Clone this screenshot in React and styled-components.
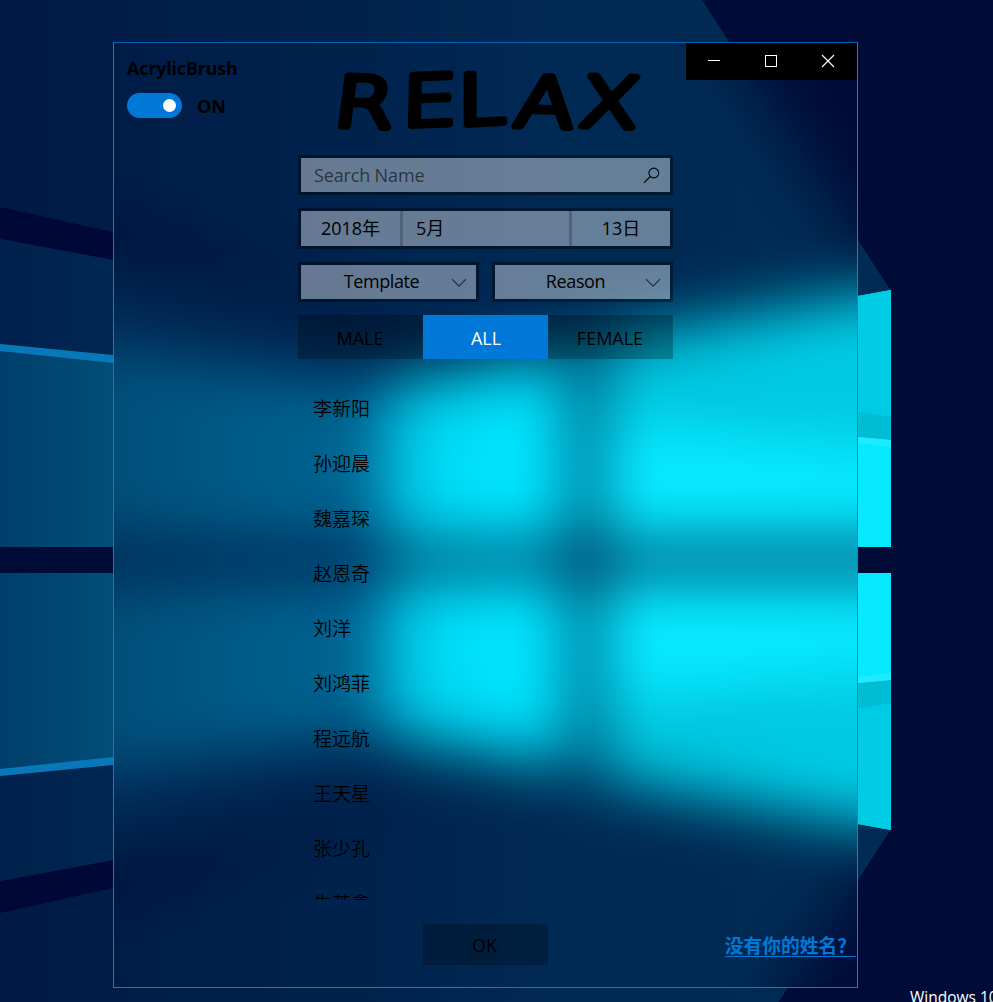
import React from "react";
import styled, { createGlobalStyle } from "styled-components";

const GlobalStyle = createGlobalStyle`
  * { box-sizing: border-box; }
  body {
    margin: 0;
    overflow: hidden;
    background: #000b38;
    color: #000;
    font: 400 18px/24px "Open Sans", "Noto Sans CJK SC", sans-serif;
  }
  button, input { font: inherit; color: inherit; border: 0; padding: 0; margin: 0; border-radius: 0; }
`;

const Desktop = styled.main`
  position: relative;
  width: 993px;
  height: 1002px;
  overflow: hidden;
`;

const WallpaperArt = styled.svg`
  display: block;
  width: 1113px;
  height: 1202px;
  margin: -100px 0 0 0;
`;

const Watermark = styled.span`
  position: absolute;
  left: 910px;
  top: 985px;
  white-space: nowrap;
  color: #fff;
  font-size: 15.5px;
`;

const Window = styled.section`
  position: absolute;
  left: 113px;
  top: 42px;
  width: 745px;
  height: 946px;
  border: 1px solid #1b78c8;
  border-top-color: #0063b4;
  border-right-color: #1485c4;
  display: grid;
  grid-template-columns: 184px 375px 184px;
  isolation: isolate;
`;

const Acrylic = styled.div`
  position: absolute;
  inset: 0;
  z-index: -1;
  overflow: hidden;
  background: #000b38;
  ${WallpaperArt} {
    margin: -143px 0 0 -114px;
    filter: blur(30px);
  }
`;

const Side = styled.div`
  display: flex;
  flex-direction: column;
  justify-content: space-between;
  align-items: ${(p) => (p.$end ? "flex-end" : "flex-start")};
  min-width: 0;
`;

const BrushSetting = styled.div`
  padding: 13px 0 0 13px;
  font-weight: 700;
`;

const BrushLabel = styled.div`
  height: 24px;
  font-size: 17.8px;
  letter-spacing: -0.1px;
`;

const SwitchRow = styled.div`
  display: flex;
  align-items: center;
  gap: 15px;
  margin-top: 13px;
  height: 25px;
  font-size: 18px;
`;

const Toggle = styled.button`
  display: flex;
  align-items: center;
  justify-content: flex-end;
  width: 55px;
  height: 25px;
  padding-right: 6px;
  border-radius: 13px;
  background: #0078d7;
`;

const Knob = styled.span`
  width: 13px;
  height: 13px;
  border-radius: 50%;
  background: #fff;
`;

const Caption = styled.div`
  display: flex;
  width: 171px;
  height: 37px;
  background: #000;
`;

const CaptionButton = styled.button`
  width: 57px;
  height: 37px;
  background: transparent;
  svg { display: block; width: 57px; height: 37px; }
`;

const HelpLink = styled.a`
  margin: 0 1px 30px 0;
  height: 22px;
  font: 700 18.75px/20px "Noto Sans CJK SC", sans-serif;
  color: #0078d7;
  white-space: nowrap;
  border-bottom: 1px solid #0078d7;
`;

const Center = styled.div`
  display: flex;
  flex-direction: column;
`;

const Title = styled.svg`
  display: block;
  width: 375px;
  height: 112px;
  flex: none;
  overflow: visible;
`;

const Form = styled.form`
  display: flex;
  flex-direction: column;
  gap: 13px;
`;

const Field = styled.div`
  display: flex;
  flex: 1;
  align-items: stretch;
  height: ${(p) => p.$height || 40}px;
  border: 3px solid rgba(0, 0, 0, 0.4);
  background: rgba(255, 255, 255, 0.4);
  background-clip: padding-box;
`;

const FieldRow = styled.div`
  display: flex;
  gap: 13px;
`;

const SearchField = styled(Field)`
  flex: none;
  align-items: center;
  justify-content: space-between;
  padding: 0 10px 0 13px;
`;

const Placeholder = styled.span`
  color: rgba(0, 0, 0, 0.6);
  letter-spacing: -0.15px;
`;

const DateField = styled(Field)`
  flex: none;
`;

const DatePart = styled.span`
  display: flex;
  align-items: center;
  width: ${(p) => p.$width}px;
  justify-content: ${(p) => (p.$left ? "flex-start" : "center")};
  padding-left: ${(p) => (p.$left ? 13 : 0)}px;
  padding-bottom: 2px;
  border-right: ${(p) => (p.$last ? 0 : 3)}px solid rgba(0, 0, 0, 0.2);
`;

const SelectLabel = styled.span`
  flex: 1;
  display: flex;
  align-items: center;
  justify-content: center;
  padding: 0 0 2px 11px;
  letter-spacing: -0.4px;
`;

const Chevron = styled.svg`
  width: 16px;
  height: 10px;
  margin: 13px 9px 0 0;
`;

const Segments = styled.div`
  display: flex;
  height: 44px;
`;

const PushButton = styled.button`
  width: 125px;
  height: ${(p) => p.$height}px;
  background: ${(p) => (p.$active ? "#0078d7" : "rgba(0, 0, 0, 0.25)")};
  color: ${(p) => (p.$active ? "#fff" : "#000")};
  padding: ${(p) => p.$padding || "2px 1px 0 0"};
`;

const NameList = styled.ul`
  list-style: none;
  margin: 0;
  padding: 22px 0 0 15px;
  height: 541px;
  overflow: hidden;
`;

const NameItem = styled.li`
  height: 55px;
  font: 350 19px/53px "Noto Sans CJK SC", sans-serif;
`;

const Footer = styled.div`
  display: flex;
  justify-content: center;
  margin-top: 24px;
`;

const NAMES = ["李新阳", "孙迎晨", "魏嘉琛", "赵恩奇", "刘洋", "刘鸿菲", "程远航", "王天星", "张少孔", "朱英鑫"];

function WallpaperHalf({ id, wide }) {
  return (
    <g>
      <path d="M0 -100H637L891 291V560H0Z" fill={`url(#${id}-sky)`} />
      <path d="M0 207L113 232L385 300L113 260L0 239Z" fill="#000838" />
      <path d="M0 239L113 260L385 318V382L113 356L0 344Z" fill={`url(#${id}-shade)`} />
      <path d="M0 344L113 356L385 382V560H0Z" fill={`url(#${id}-beam)`} />
      <path d="M0 344L113 355L385 382L113 363L0 351Z" fill="#0878b8" />
      <path d="M0 547H891V560H0Z" fill="#000b38" />
      <path d="M385 382L572 348V547H385Z" fill={`url(#${id}-pane)`} />
      <path d="M385 382L572 348V384L385 406Z" fill="#00bfdc" />
      <path d="M598 343L891 290V547H598Z" fill="#06e9ff" />
      <path d="M598 343L891 290V440L598 411Z" fill="#00cbe4" />
      <path d="M598 364L891 417V440L598 412Z" fill="#00bdd6" />
      <path d="M858 437L891 440V447L858 443Z" fill="#20eaff" />
      {wide && (
        <>
          <path d="M891 290L980 282V440H891Z" fill="#00cde6" />
          <path d="M891 440H980V547H891Z" fill="#08ebff" />
        </>
      )}
    </g>
  );
}

function Wallpaper({ id, wide }) {
  return (
    <WallpaperArt viewBox="0 -100 1113 1202" aria-hidden="true">
      <defs>
        <linearGradient id={`${id}-sky`} x1="0" x2="891" y1="0" y2="0" gradientUnits="userSpaceOnUse">
          <stop offset="0" stopColor="#001a45" />
          <stop offset="0.3" stopColor="#00204b" />
          <stop offset="0.65" stopColor="#002a54" />
          <stop offset="1" stopColor="#002b54" />
        </linearGradient>
        <linearGradient id={`${id}-shade`} x1="0" x2="385" y1="0" y2="0" gradientUnits="userSpaceOnUse">
          <stop offset="0" stopColor="#00214d" />
          <stop offset="0.3" stopColor="#002852" />
          <stop offset="1" stopColor="#00204b" />
        </linearGradient>
        <linearGradient id={`${id}-beam`} x1="0" x2="385" y1="0" y2="0" gradientUnits="userSpaceOnUse">
          <stop offset="0" stopColor="#003f6c" />
          <stop offset="0.3" stopColor="#004f79" />
          <stop offset="0.75" stopColor="#005f8b" />
          <stop offset="1" stopColor="#006494" />
        </linearGradient>
        <linearGradient id={`${id}-pane`} x1="385" x2="572" y1="0" y2="0" gradientUnits="userSpaceOnUse">
          <stop offset="0" stopColor="#00c8e6" />
          <stop offset="0.5" stopColor="#00e3fc" />
          <stop offset="1" stopColor="#00e6ff" />
        </linearGradient>
      </defs>
      <rect y="-100" width="1113" height="1202" fill="#000b38" />
      <WallpaperHalf id={id} wide={wide} />
      <g transform="matrix(1 0 0 -1 0 1120)">
        <WallpaperHalf id={id} wide={wide} />
      </g>
    </WallpaperArt>
  );
}

function Select({ label }) {
  return (
    <Field>
      <SelectLabel>{label}</SelectLabel>
      <Chevron viewBox="0 0 16 10" fill="none" stroke="#1c2c40" strokeWidth="1.1">
        <path d="M1 1.2L8 8.2L15 1.2" />
      </Chevron>
    </Field>
  );
}

export default function App() {
  return (
    <>
      <GlobalStyle />
      <Desktop>
        <Wallpaper id="desk" />
        <Watermark>Windows 10</Watermark>
        <Window>
          <Acrylic>
            <Wallpaper id="blur" wide />
          </Acrylic>
          <Side>
            <BrushSetting>
              <BrushLabel>AcrylicBrush</BrushLabel>
              <SwitchRow>
                <Toggle type="button" aria-label="AcrylicBrush"><Knob /></Toggle>
                <span>ON</span>
              </SwitchRow>
            </BrushSetting>
          </Side>
          <Center>
            <Title viewBox="0 0 375 112">
              <text
                transform="translate(0 83) skewX(-5) scale(1.25 1)"
                x="27 83 127.5 172 223.5"
                y="0 0 -1 0 0"
                rotate="2 -3 -4 2 2"
                fontFamily="DejaVu Sans"
                fontWeight="200"
                fontSize="69"
                stroke="#000"
                strokeWidth="7"
                strokeLinejoin="round"
                strokeLinecap="round"
              >
                RELAX
              </text>
            </Title>
            <Form>
              <SearchField>
                <Placeholder>Search Name</Placeholder>
                <svg width="17" height="17" viewBox="0 0 17 17" fill="none" stroke="#000" strokeWidth="1.1">
                  <circle cx="10.8" cy="6" r="4.9" />
                  <path d="M7.3 9.5L1 15.8" />
                </svg>
              </SearchField>
              <DateField $height={41}>
                <DatePart $width={102}>2018年</DatePart>
                <DatePart $width={169} $left>5月</DatePart>
                <DatePart $width={98} $last>13日</DatePart>
              </DateField>
              <FieldRow>
                <Select label="Template" />
                <Select label="Reason" />
              </FieldRow>
              <Segments>
                <PushButton type="button" $height={44}>MALE</PushButton>
                <PushButton type="button" $height={44} $active $padding="2px 0 0 1px">ALL</PushButton>
                <PushButton type="button" $height={44}>FEMALE</PushButton>
              </Segments>
            </Form>
            <NameList>
              {NAMES.map((name) => <NameItem key={name}>{name}</NameItem>)}
            </NameList>
            <Footer>
              <PushButton type="button" $height={41} $padding="1px 2px 0 0">OK</PushButton>
            </Footer>
          </Center>
          <Side $end>
            <Caption>
              <CaptionButton aria-label="Minimize">
                <svg viewBox="0 0 57 37"><path d="M22 17.5H34" stroke="#fff" /></svg>
              </CaptionButton>
              <CaptionButton aria-label="Maximize">
                <svg viewBox="0 0 57 37"><rect x="22.5" y="12.5" width="11" height="11" fill="none" stroke="#fff" /></svg>
              </CaptionButton>
              <CaptionButton aria-label="Close">
                <svg viewBox="0 0 57 37"><path d="M22 12L34 24M34 12L22 24" stroke="#fff" strokeWidth="1.1" /></svg>
              </CaptionButton>
            </Caption>
            <HelpLink>没有你的姓名？</HelpLink>
          </Side>
        </Window>
      </Desktop>
    </>
  );
}
